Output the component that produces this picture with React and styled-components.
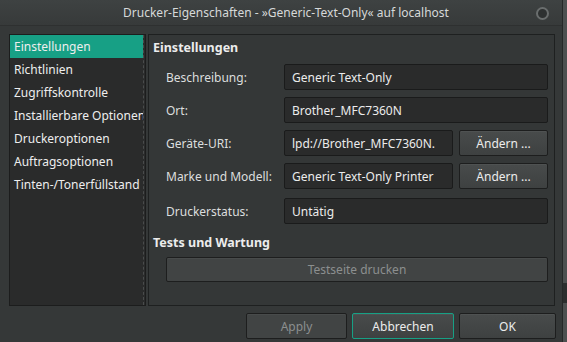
import styled, { createGlobalStyle } from "styled-components";

const GlobalStyle = createGlobalStyle`
  html, body {
    margin: 0;
    padding: 0;
    background: #4a4d4d;
  }
  body {
    font-family: "Noto Sans", "DejaVu Sans", sans-serif;
    font-size: 12px;
    color: #e2e2e2;
  }
`;

const settings = [
  { label: "Beschreibung:", value: "Generic Text-Only" },
  { label: "Ort:", value: "Brother_MFC7360N" },
  { label: "Geräte-URI:", value: "lpd://Brother_MFC7360N.", action: "Ändern ..." },
  { label: "Marke und Modell:", value: "Generic Text-Only Printer", action: "Ändern ..." },
  { label: "Druckerstatus:", value: "Untätig" },
];

const pages = [
  "Einstellungen",
  "Richtlinien",
  "Zugriffskontrolle",
  "Installierbare Optionen",
  "Druckeroptionen",
  "Auftragsoptionen",
  "Tinten-/Tonerfüllstand",
];

function App() {
  return (
    <Screen>
      <GlobalStyle />
      <Window>
        <TitleBar>
          <Title>Drucker-Eigenschaften - »Generic-Text-Only« auf localhost</Title>
          <CloseDot />
        </TitleBar>
        <Body>
          <Main>
            <Sidebar>
              <PageList>
                {pages.map((p, i) => (
                  <PageItem key={p} $active={i === 0}>
                    {p}
                  </PageItem>
                ))}
              </PageList>
            </Sidebar>
            <Panel>
              <SectionTitle>Einstellungen</SectionTitle>
              <Form>
                {settings.map((s) => (
                  <Row key={s.label}>
                    <Label>{s.label}</Label>
                    <Field>
                      <Entry>{s.value}</Entry>
                      {s.action && <Button $width={89}>{s.action}</Button>}
                    </Field>
                  </Row>
                ))}
              </Form>
              <SectionTitle $top={10}>Tests und Wartung</SectionTitle>
              <TestRow>
                <Button $disabled $wide>
                  Testseite drucken
                </Button>
              </TestRow>
            </Panel>
          </Main>
          <Footer>
            <Button $disabled $width={101}>
              Apply
            </Button>
            <Button $focus $width={102}>
              Abbrechen
            </Button>
            <Button $width={97}>OK</Button>
          </Footer>
        </Body>
      </Window>
      <Edge>
        <EdgeMark />
      </Edge>
    </Screen>
  );
}

export default App;

const Screen = styled.div`
  display: flex;
  width: 567px;
  height: 342px;
  overflow: hidden;
`;

const Window = styled.div`
  width: 563px;
  height: 342px;
  display: flex;
  flex-direction: column;
  background: #353838;
  border-right: 1px solid #262828;
  box-sizing: border-box;
`;

const Edge = styled.div`
  flex: 1;
  display: flex;
  flex-direction: column;
  justify-content: flex-end;
  padding-bottom: 39px;
  background: #4d5050;
`;

const EdgeMark = styled.div`
  height: 20px;
  background: #2c2e2e;
`;

const TitleBar = styled.div`
  position: relative;
  height: 26px;
  display: flex;
  align-items: center;
  justify-content: center;
  background: linear-gradient(#3e4242, #373a3a);
  border-bottom: 1px solid #2e3030;
  box-sizing: border-box;
`;

const Title = styled.div`
  font-size: 12px;
  color: #d6d9d9;
  padding-left: 10px;
`;

const CloseDot = styled.div`
  position: absolute;
  right: 13px;
  top: 7px;
  width: 9px;
  height: 9px;
  border-radius: 50%;
  border: 2px solid #6a6e6e;
  background: #2e3131;
`;

const Body = styled.div`
  flex: 1;
  display: flex;
  flex-direction: column;
  padding: 8px 6px 0 9px;
`;

const Main = styled.div`
  display: flex;
  gap: 2px;
  height: 272px;
  margin-right: 1px;
`;

const Sidebar = styled.div`
  width: 137px;
  background: #2a2b2b;
  border: 1px solid #1c1d1d;
  box-sizing: border-box;
  display: flex;
`;

const PageList = styled.div`
  width: 134px;
  border-right: 1px dashed #4a4c4c;
  box-sizing: border-box;
`;

const PageItem = styled.div`
  height: 23px;
  line-height: 23px;
  padding-left: 4px;
  white-space: nowrap;
  overflow: hidden;
  color: #eeeeee;
  background: ${(p) => (p.$active ? "#17a085" : "transparent")};
`;

const Panel = styled.div`
  flex: 1;
  border: 1px solid #1e2020;
  background: #343737;
  box-sizing: border-box;
  padding: 4px 6px 0 4px;
`;

const SectionTitle = styled.div`
  font-weight: bold;
  font-size: 12.5px;
  color: #ececec;
  height: 18px;
  line-height: 18px;
  margin-top: ${(p) => p.$top || 0}px;
`;

const Form = styled.div`
  display: flex;
  flex-direction: column;
  gap: 7px;
  margin-top: 7px;
  padding-left: 13px;
`;

const Row = styled.div`
  display: grid;
  grid-template-columns: 118px 1fr;
  align-items: center;
  height: 26px;

  &:last-child {
    margin-top: 2px;
  }
`;

const Label = styled.div`
  color: #dcdede;
`;

const Field = styled.div`
  display: flex;
  gap: 6px;
  height: 100%;
`;

const Entry = styled.div`
  flex: 1;
  display: flex;
  align-items: center;
  padding-left: 7px;
  background: #2a2b2b;
  border: 1px solid #1a1b1b;
  border-radius: 2px;
  box-sizing: border-box;
  white-space: nowrap;
  overflow: hidden;
  color: #ececec;
`;

const TestRow = styled.div`
  padding-left: 13px;
  margin-top: 5px;
  display: flex;
  height: 25px;
`;

const Button = styled.div`
  width: ${(p) => (p.$wide ? "auto" : `${p.$width}px`)};
  flex: ${(p) => (p.$wide ? 1 : "none")};
  display: flex;
  align-items: center;
  justify-content: center;
  box-sizing: border-box;
  border-radius: 2px;
  border: 1px solid ${(p) => (p.$focus ? "#17a085" : "#1d1e1e")};
  background: ${(p) =>
    p.$disabled ? "#414444" : "linear-gradient(#484b4b, #3e4141)"};
  color: ${(p) => (p.$disabled ? "#8c8f8f" : "#ececec")};
  box-shadow: inset 0 1px 0 rgba(255, 255, 255, 0.04);
`;

const Footer = styled.div`
  display: flex;
  justify-content: flex-end;
  gap: 5px;
  height: 26px;
  margin-top: 7px;
`;
